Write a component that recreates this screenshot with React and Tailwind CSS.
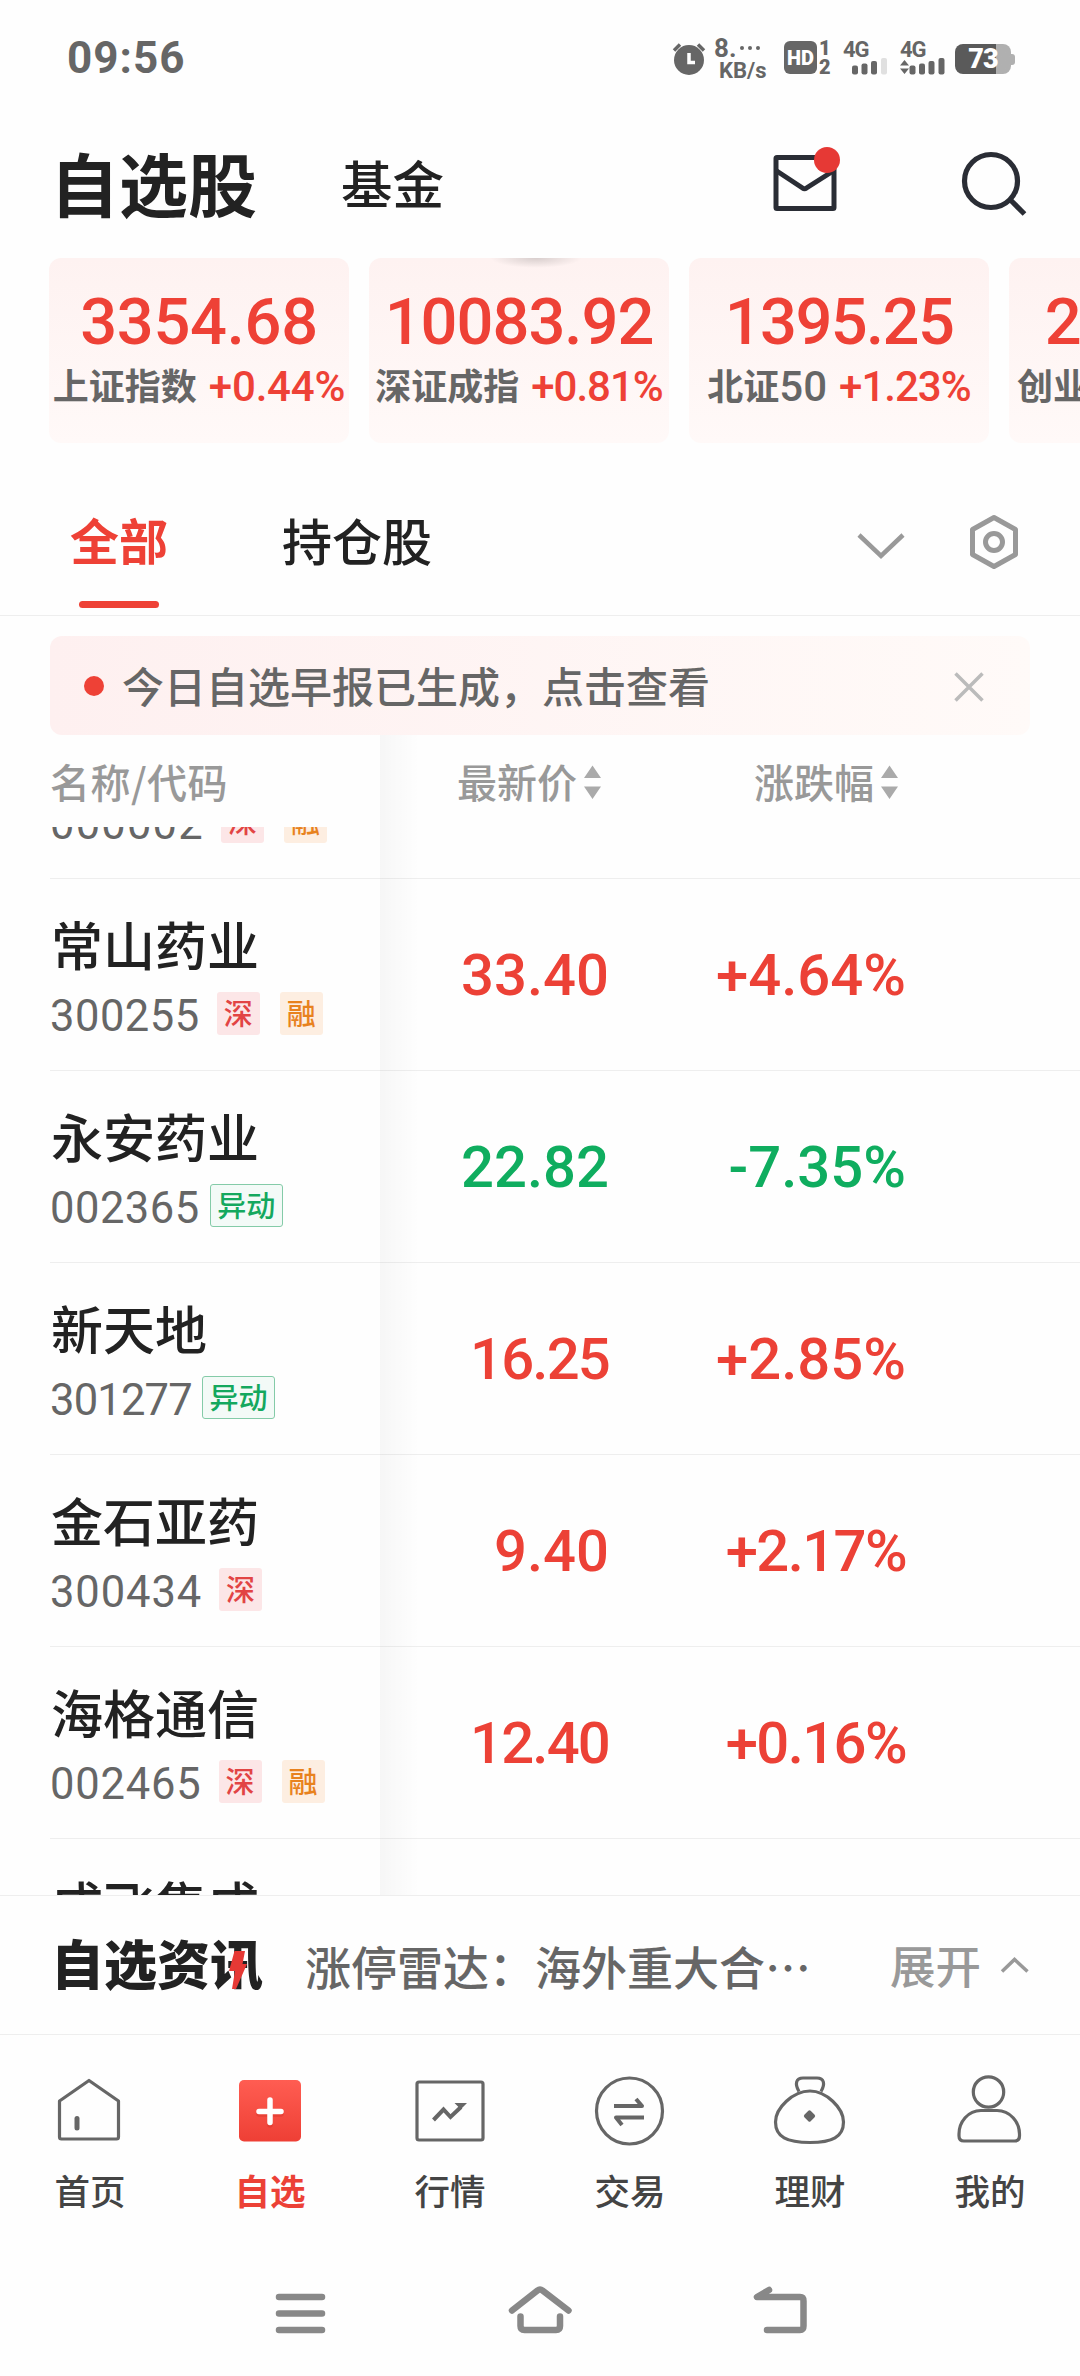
import React from "react";

const indices = [
  { value: "3354.68", name: "上证指数", suffix: "", change: "+0.44%", valueFit: "tracking-[-0.3px]", changeFit: "tracking-[-0.2px]" },
  { value: "10083.92", name: "深证成指", suffix: "", change: "+0.81%", valueFit: "tracking-[-1px]", changeFit: "tracking-[-1px]" },
  { value: "1395.25", name: "北证", suffix: "50", change: "+1.23%", valueFit: "tracking-[-1.6px]", changeFit: "tracking-[-1px]" },
  { value: "2011.47", name: "创业板指", suffix: "", change: "+0.65%", valueFit: "tracking-[-1.6px]", changeFit: "tracking-[-1.6px]" },
];

const stocks = [
  { name: "", code: "000002", tags: ["深", "融"], price: "", change: "", codeFit: "tracking-[1.2px]" },
  { name: "常山药业", code: "300255", tags: ["深", "融"], price: "33.40", change: "+4.64%", codeFit: "tracking-[0.5px]" },
  { name: "永安药业", code: "002365", tags: ["异动"], price: "22.82", change: "-7.35%", codeFit: "tracking-[0.5px]" },
  { name: "新天地", code: "301277", tags: ["异动"], price: "16.25", change: "+2.85%", codeFit: "tracking-[-0.8px]", priceFit: "tracking-[-1.8px]" },
  { name: "金石亚药", code: "300434", tags: ["深"], price: "9.40", change: "+2.17%", codeFit: "tracking-[0.9px]", changeFit: "tracking-[-1.6px]" },
  { name: "海格通信", code: "002465", tags: ["深", "融"], price: "12.40", change: "+0.16%", codeFit: "tracking-[0.8px]", priceFit: "tracking-[-1.8px]", changeFit: "tracking-[-1.6px]" },
  { name: "成飞集成", code: "", tags: [], price: "", change: "", codeFit: "" },
];

const tagStyles = {
  深: "w-[43px] bg-[#fce6e7] text-[#e24444]",
  融: "w-[43px] bg-[#fdeee1] text-[#e8821e]",
  异动: "w-[73px] border-[1.5px] border-[#84cba8] bg-[#f3faf7] text-[#14a85e]",
};

function StatusBar() {
  return (
    <div className="flex h-[108px] items-center pl-[67px] pr-[65px] font-[Roboto] text-[#666]">
      <span className="mt-[8px] text-[44px] leading-none font-bold tracking-[1px]">09:56</span>

      <div className="ml-auto flex h-[40px] items-start pt-[3px]">
        {/* Alarm */}
        <svg className="mt-[4px] h-[36px] w-[34px]" viewBox="0 0 34 36" fill="none">
          <circle cx="17" cy="19" r="15" fill="#666" />
          <path d="M2 9.500l6-6M32 9.500l-6-6" stroke="#666" strokeWidth="3.500" />
          <path d="M17 12v9.500h6" stroke="#fff" strokeWidth="3.500" />
        </svg>

        {/* Network speed */}
        <div className="ml-[8px] w-[57px] font-bold">
          <div className="flex h-[20px] items-center pt-[2px] text-[26px] leading-none">
            <span>8.</span>
            <span className="ml-[4px] flex gap-[4px]">
              <i className="h-[4px] w-[4px] rounded-full bg-[#666]" />
              <i className="h-[4px] w-[4px] rounded-full bg-[#666]" />
              <i className="h-[4px] w-[4px] rounded-full bg-[#666]" />
            </span>
          </div>
          <div className="mt-[3px] pl-[5px] text-[22px] leading-[22px]">KB/s</div>
        </div>

        {/* HD */}
        <div className="ml-[13px] mt-[4px] flex h-[33px] w-[33px] items-center justify-center rounded-[6px] bg-[#666] text-[20px] leading-none font-black text-white">
          HD
        </div>
        <div className="ml-[2px] mt-[2px] w-[13px] text-[20px] leading-[19px] font-black">
          <div>1</div>
          <div>2</div>
        </div>

        {/* Signals */}
        <div className="ml-[11px] w-[46px]">
          <div className="pt-[2px] text-[22px] leading-[21px] font-bold tracking-[-1px]">4G</div>
          <svg className="-mt-[3px] h-[18px] w-[46px]" viewBox="0 0 46 18" fill="#666">
            <rect x="9" y="8.500" width="6" height="9" rx="2" />
            <rect x="18.500" y="6.500" width="6" height="11" rx="2" />
            <rect x="28" y="4" width="6" height="13.500" rx="2" />
            <rect x="38" y="1" width="6" height="16.500" rx="2" fill="#e0e0e0" />
          </svg>
        </div>
        <div className="ml-[11px] w-[46px]">
          <div className="pt-[2px] text-[22px] leading-[21px] font-bold tracking-[-1px]">4G</div>
          <svg className="-mt-[3px] h-[18px] w-[46px]" viewBox="0 0 46 18" fill="#666">
            <path d="M0 8.500L4.500 3L9 8.500zM0 11.500L4.500 17L9 11.500z" />
            <rect x="9.500" y="8.500" width="6" height="9" rx="2" />
            <rect x="19" y="6.500" width="6" height="11" rx="2" />
            <rect x="28.500" y="4" width="6" height="13.500" rx="2" />
            <rect x="38.500" y="1" width="6" height="16.500" rx="2" />
          </svg>
        </div>

        {/* Battery */}
        <div className="ml-[9px] mt-[7px] flex items-center">
          <div className="flex h-[30px] w-[56px] items-center justify-center rounded-[8px] bg-linear-to-r from-[#5a5a5a] from-[73%] to-[#b0b0b0] to-[73%] text-[27px] leading-none font-black tracking-[-1px] text-white">
            73
          </div>
          <div className="h-[11px] w-[4px] rounded-r-[3px] bg-[#b0b0b0]" />
        </div>
      </div>
    </div>
  );
}

function Header() {
  return (
    <div className="flex h-[150px] items-center pb-[2px] pl-[50px] text-[#222]">
      <span className="w-[291px] text-[69px] leading-none font-bold">自选股</span>
      <span className="w-[423px] text-[51.500px] leading-none font-medium">基金</span>
      <div className="relative h-[80px] w-[80px]">
        <svg className="h-full w-full" viewBox="0 0 80 80" fill="none" stroke="#2a2d35" strokeWidth="5">
          <rect x="12" y="15.500" width="58" height="51" rx="1" />
          <path d="M12 28.500L38.500 46Q40.500 47.500 42.500 46L70 28.500" />
        </svg>
        <i className="absolute left-[50px] top-[5px] h-[26px] w-[26px] rounded-full bg-[#e63935]" />
      </div>
      <svg className="ml-[106px] h-[80px] w-[80px]" viewBox="0 0 80 80" fill="none" stroke="#2a2d35" strokeWidth="5.200">
        <circle cx="41" cy="39" r="26.500" />
        <path d="M60 57.500L74.500 72" />
      </svg>
    </div>
  );
}

function IndexCards() {
  return (
    <div className="relative flex h-[185px] gap-[20px] overflow-hidden pl-[49px]">
      {indices.map((item) => (
        <div
          key={item.name}
          className="flex w-[300px] shrink-0 flex-col items-center rounded-[12px] bg-linear-to-b from-[#fef2f1] to-[#fff9f8] pt-[32px] font-medium whitespace-nowrap text-[#ee4136]"
        >
          <div className={`font-[Roboto] text-[65px] leading-[64px] ${item.valueFit}`}>{item.value}</div>
          <div className="mt-[9px] flex h-[41px] items-center leading-none">
            <span className="text-[36px] font-bold text-[#666]">{item.name}</span>
            <span className="mt-[6px] font-[Roboto] text-[42px] text-[#666]">{item.suffix}</span>
            <span className={`ml-[12px] mt-[6px] font-[Roboto] text-[42px] ${item.changeFit}`}>{item.change}</span>
          </div>
        </div>
      ))}
      {/* Drawer handle shadow */}
      <div className="absolute left-[490px] top-0 h-[10px] w-[92px] bg-radial-[at_50%_0%] from-black/15 to-transparent to-70%" />
    </div>
  );
}

function Tabs() {
  return (
    <div className="flex h-[173px] items-start border-b border-[#eee] pl-[70px] pt-[69px]">
      <div className="mt-[2px] flex w-[98px] flex-col items-center">
        <span className="text-[49px] leading-none font-bold text-[#ee4136]">全部</span>
        <i className="mt-[38px] h-[7px] w-[80px] rounded-full bg-[#ee4136]" />
      </div>
      <span className="ml-[114px] mt-[2px] w-[150px] text-[50px] leading-none font-medium text-[#222]">持仓股</span>
      <svg className="ml-[418px] h-[60px] w-[60px]" viewBox="0 0 60 60" fill="none" stroke="#999" strokeWidth="4.500">
        <path d="M9 23L31 44L53 23" />
      </svg>
      <svg className="ml-[54px] h-[60px] w-[60px]" viewBox="0 0 60 60" fill="none" stroke="#999" strokeWidth="5" strokeLinejoin="round">
        <path d="M30 5.500L51.500 17.500V42.500L30 54.500L8.500 42.500V17.500z" />
        <circle cx="30" cy="30" r="8.500" />
      </svg>
    </div>
  );
}

function Notice() {
  return (
    <div className="mx-[50px] mt-[20px] flex h-[99px] items-center rounded-[12px] bg-linear-to-r from-[#fef0f0] to-[#fffaf8] pl-[34px]">
      <i className="h-[20px] w-[20px] rounded-full bg-[#ee4136]" />
      <span className="ml-[18px] pb-[2px] text-[42px] leading-none font-medium whitespace-nowrap text-[#666]">
        今日自选早报已生成，点击查看
      </span>
      <svg className="ml-[242px] mt-[3px] h-[34px] w-[34px] shrink-0" viewBox="0 0 34 34" stroke="#bbb" strokeWidth="3.500">
        <path d="M3.500 3.500L30.500 30.500M30.500 3.500L3.500 30.500" />
      </svg>
    </div>
  );
}

function SortIcon() {
  return (
    <svg className="mt-[1px] h-[34px] w-[17px]" viewBox="0 0 17 34" fill="#aaa">
      <path d="M0 13L8.500 0.500L17 13zM0 21.500L8.500 34L17 21.500z" />
    </svg>
  );
}

function StockRow({ stock }) {
  const color = stock.change.startsWith("-") ? "text-[#0fad5f]" : "text-[#ec4136]";
  return (
    <div className="ml-[50px] flex h-[192px] shrink-0 border-b border-[#eee] font-medium">
      <div className="w-[330px] pt-[39px]">
        <div className="h-[52px] pl-[1px] text-[52px] leading-none text-[#222]">{stock.name}</div>
        <div className="mt-[22px] flex h-[43px] items-center">
          <span className={`mt-[6px] font-[Roboto] text-[43.500px] leading-none font-[450] text-[#666] ${stock.codeFit}`}>
            {stock.code}
          </span>
          {stock.tags.map((tag, i) => (
            <span
              key={tag}
              className={`flex h-[43px] items-center justify-center rounded-[3px] pb-[3px] text-[29px] leading-none ${
                i > 0 ? "ml-[20px]" : tag === "异动" ? "ml-[10px]" : "ml-[17px]"
              } ${tagStyles[tag]}`}
            >
              {tag}
            </span>
          ))}
        </div>
      </div>
      <div className={`flex w-[229px] items-center justify-end font-[Roboto] text-[58px] leading-none ${color} ${stock.priceFit ?? ""}`}>
        {stock.price}
      </div>
      <div className={`flex w-[297px] items-center justify-end font-[Roboto] text-[58px] leading-none ${color} ${stock.changeFit ?? ""}`}>
        {stock.change}
      </div>
    </div>
  );
}

function StockTable() {
  return (
    <div className="relative h-[1160px]">
      <div className="flex h-[92px] items-center pl-[50px] text-[40px] leading-none font-medium text-[#999]">
        <span className="w-[407px] tracking-[0.5px]">名称/代码</span>
        <span className="flex w-[297px] items-center gap-[7px]">
          最新价
          <SortIcon />
        </span>
        <span className="flex items-center gap-[7px]">
          涨跌幅
          <SortIcon />
        </span>
      </div>
      <div className="flex h-[1068px] flex-col overflow-hidden">
        <div className="-mt-[140px] flex flex-col">
          {stocks.map((stock, i) => (
            <StockRow key={i} stock={stock} />
          ))}
        </div>
      </div>
      {/* Frozen column shadow */}
      <div className="absolute left-[380px] top-0 h-full w-[40px] bg-linear-to-r from-black/[0.03] to-transparent" />
    </div>
  );
}

function NewsBar() {
  return (
    <div className="flex h-[140px] items-center border-y border-[#eee] pl-[51px] leading-none whitespace-nowrap">
      <div className="relative w-[254px] pb-[5px] text-[53px] font-black text-[#222]">
        自选资讯
        <svg className="absolute left-[176px] top-[14px] h-[40px] w-[22px]" viewBox="0 0 22 40">
          <path d="M7.500 1H18L15.500 14H20L9 39H5L8 21H2z" fill="#e63935" />
        </svg>
      </div>
      <span className="w-[585px] text-[46px] font-medium text-[#666]">涨停雷达：海外重大合…</span>
      <span className="text-[45.500px] font-medium text-[#999]">展开</span>
      <svg className="ml-[18px] h-[20px] w-[32px]" viewBox="0 0 32 20" fill="none" stroke="#999" strokeWidth="3.500">
        <path d="M3 16.500L15.500 4.500L28.500 16.500" />
      </svg>
    </div>
  );
}

// 80x80 drawing area shared by all the tab icons
function Icon({ children }) {
  return (
    <svg className="h-[80px] w-[80px]" viewBox="0 0 80 80" fill="none" stroke="#666" strokeWidth="3.200" strokeLinejoin="round">
      {children}
    </svg>
  );
}

const navItems = [
  {
    label: "首页",
    icon: (
      <Icon>
        <path d="M39 9.500L68.500 30V66Q68.500 68 66.500 68H11.500Q9.500 68 9.500 66V30z" />
        <path d="M27 47.500V57" strokeWidth="5" strokeLinecap="round" />
      </Icon>
    ),
  },
  {
    label: "自选",
    active: true,
    icon: (
      <Icon>
        <defs>
          <linearGradient id="plusBg" x1="0" y1="0" x2="0" y2="1">
            <stop offset="0" stopColor="#ff5d52" />
            <stop offset="1" stopColor="#ee3f35" />
          </linearGradient>
        </defs>
        <rect x="9" y="9" width="62" height="61.500" rx="5" fill="url(#plusBg)" stroke="none" />
        <path d="M40 31V54M29 43H51" stroke="#c9281f" strokeOpacity="0.300" strokeWidth="5.500" strokeLinecap="round" />
        <path d="M40 29V51.500M29 40.500H51" stroke="#fff" strokeWidth="5.500" strokeLinecap="round" />
      </Icon>
    ),
  },
  {
    label: "行情",
    icon: (
      <Icon>
        <rect x="7" y="11" width="66" height="58" rx="2" />
        <path d="M23.500 49L33.500 38.500L40.500 46L51 36" strokeWidth="4" strokeLinejoin="miter" />
        <path d="M44.500 32H57L48.500 40.500L49 36.500z" fill="#666" stroke="none" />
      </Icon>
    ),
  },
  {
    label: "交易",
    icon: (
      <Icon>
        <circle cx="39.500" cy="40" r="33" />
        <path d="M24 35H52L46 28" strokeWidth="4" />
        <path d="M54 46.500H26L32 54" strokeWidth="4" />
      </Icon>
    ),
  },
  {
    label: "理财",
    icon: (
      <Icon>
        <path d="M29 20.500C24.500 13 26 7 33 7H47C54 7 55.500 13 51 20.500" />
        <path d="M40 20C56 20 73.500 37 73.500 51C73.500 66 62 71.500 40 71.500C17 71.500 5.500 66 5.500 51C5.500 37 23 20 40 20z" />
        <path d="M39.500 41L43.500 45L39.500 49L35.500 45z" fill="#666" />
      </Icon>
    ),
  },
  {
    label: "我的",
    icon: (
      <Icon>
        <circle cx="38.500" cy="21" r="15.200" />
        <path d="M31 39.500H47C60 39.500 69.500 51 69.500 63V65Q69.500 70 64.500 70H14Q9 70 9 65V63C9 51 18 39.500 31 39.500z" />
      </Icon>
    ),
  },
];

function BottomNav() {
  return (
    <div className="flex h-[235px] pt-[36px]">
      {navItems.map((item) => (
        <div key={item.label} className="flex w-[180px] flex-col items-center">
          {item.icon}
          <span
            className={`mt-[21px] text-[35.500px] leading-none ${
              item.active ? "font-bold text-[#ec4136]" : "font-medium text-[#444]"
            }`}
          >
            {item.label}
          </span>
        </div>
      ))}
    </div>
  );
}

function SystemNav() {
  return (
    <div className="flex h-[106px] gap-[160px] pl-[260px]">
      <svg className="h-[80px] w-[80px]" viewBox="0 0 80 80" fill="none" stroke="#888" strokeWidth="6.500" strokeLinecap="round">
        <path d="M19 27H62M19 43.500H62M19 60H62" />
      </svg>
      <svg className="h-[80px] w-[80px]" viewBox="0 0 80 80" fill="none" stroke="#888" strokeWidth="6.500" strokeLinecap="round" strokeLinejoin="round">
        <path d="M12 40.500L37.500 20.500Q40 18.500 42.500 20.500L68.500 40.500" />
        <path d="M20.500 46.500V56Q20.500 60 24.500 60H56Q60 60 60 56V46.500" />
      </svg>
      <svg className="h-[80px] w-[80px]" viewBox="0 0 80 80" fill="none" stroke="#888" strokeWidth="6.500" strokeLinecap="round" strokeLinejoin="round">
        <path d="M29 20L17 27H60Q63.500 27 63.500 31V56Q63.500 60 60 60H27" />
      </svg>
    </div>
  );
}

export default function App() {
  return (
    <div
      lang="zh-CN"
      className="flex h-[2376px] w-[1080px] flex-col overflow-hidden bg-[#fefefe] font-['Noto_Sans_CJK_SC',sans-serif]"
    >
      <StatusBar />
      <Header />
      <IndexCards />
      <Tabs />
      <Notice />
      <StockTable />
      <NewsBar />
      <BottomNav />
      <SystemNav />
    </div>
  );
}
